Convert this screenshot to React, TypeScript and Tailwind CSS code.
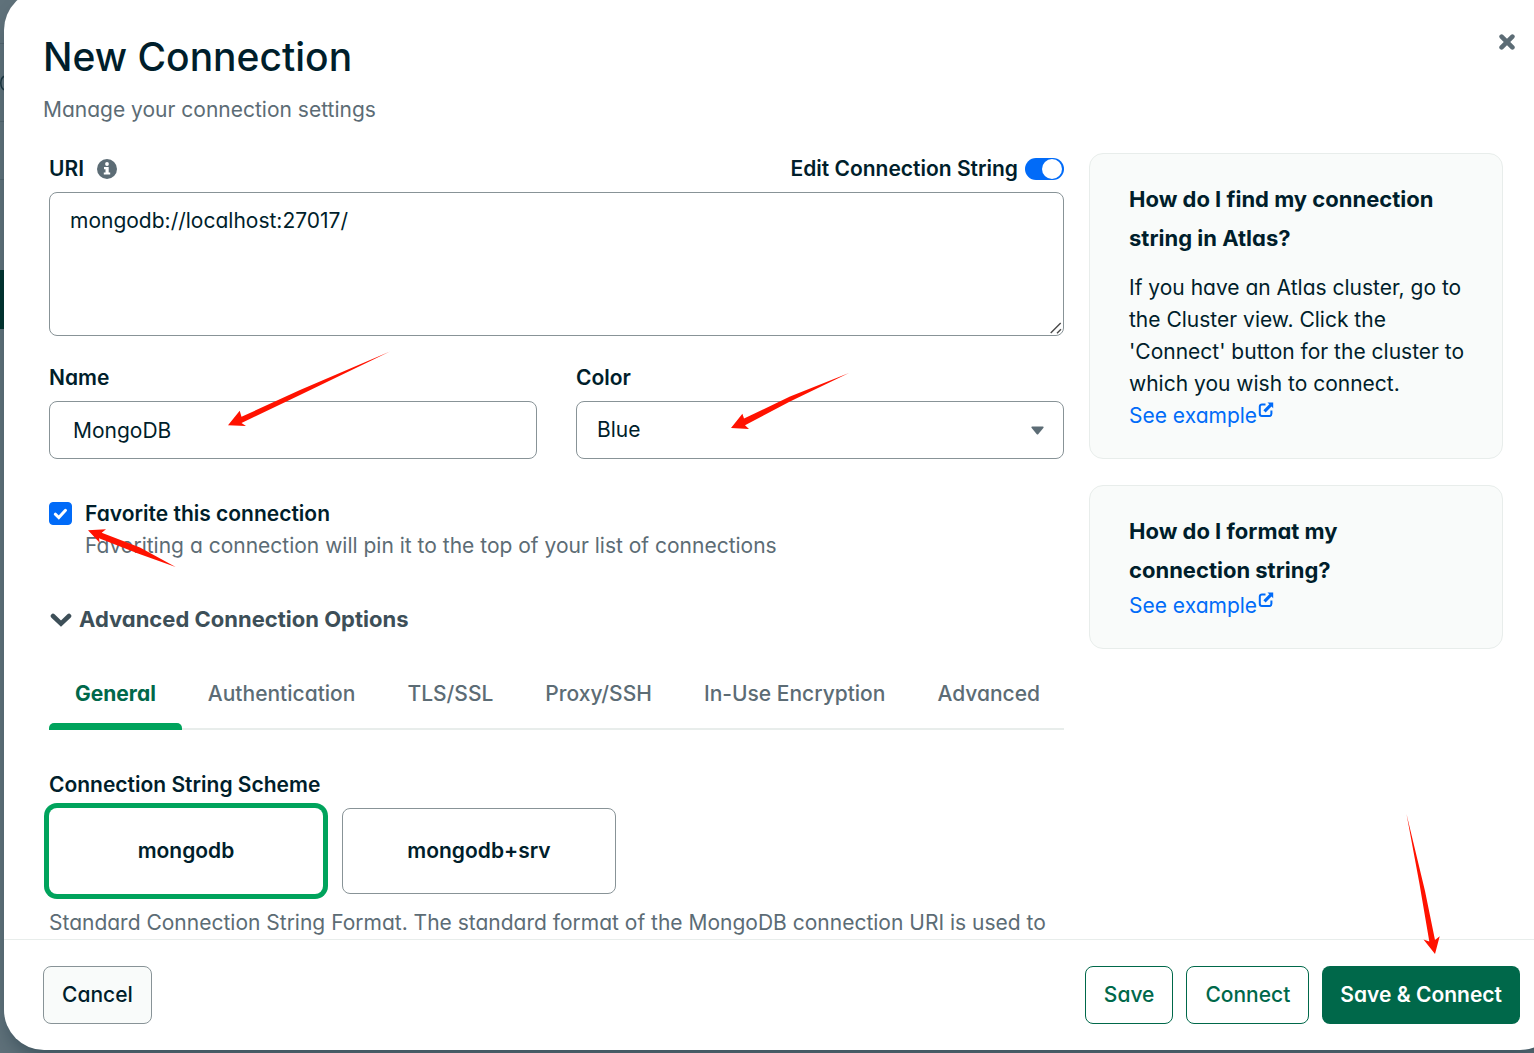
import { useState } from 'react';
import type { ReactNode } from 'react';

const TABS = ['General', 'Authentication', 'TLS/SSL', 'Proxy/SSH', 'In-Use Encryption', 'Advanced'];
const SCHEMES = ['mongodb', 'mongodb+srv'];
const COLORS = ['No Color', 'Green', 'Blue', 'Red', 'Yellow'];

function InfoIcon() {
  return (
    <svg className="size-5" viewBox="0 0 20 20" aria-hidden="true">
      <circle cx="10" cy="10" r="10" fill="#5c6c75" />
      <circle cx="10" cy="5" r="1.9" fill="#fff" />
      <path d="M7 8h4.700v5.400H13.200v2.200H6.800v-2.200h1.700v-3.200H7z" fill="#fff" />
    </svg>
  );
}

function CloseIcon() {
  return (
    <svg className="size-4" viewBox="0 0 16 16" aria-hidden="true">
      <path d="M2.6 2.6l10.8 10.8M13.4 2.6L2.6 13.4" stroke="#5c6c75" strokeWidth="4.6" strokeLinecap="round" />
    </svg>
  );
}

function OpenNewTabIcon() {
  return (
    <svg className="mt-[2px] size-4" viewBox="0 0 16 16" aria-hidden="true">
      <path d="M7.500 2.400H4A2.200 2.200 0 0 0 1.800 4.600v7.200A2.200 2.200 0 0 0 4 14h7.200a2.200 2.200 0 0 0 2.200-2.200V8.600" fill="none" stroke="#016bf8" strokeWidth="2" />
      <path d="M9.500.500h5.700v5.700l-1.700-1.700-5.900 5.900L5.400 8.200l5.900-5.900z" fill="#016bf8" />
    </svg>
  );
}

function ChevronIcon() {
  return (
    <svg className="mt-[2px] h-[14px] w-[22px]" viewBox="0 0 22 14" aria-hidden="true">
      <path d="M3 3l8 7.600L19 3" fill="none" stroke="#3d4f58" strokeWidth="4.600" strokeLinecap="round" />
    </svg>
  );
}

function HelpCard({ title, children }: { title: string; children: ReactNode }) {
  return (
    <section className="rounded-[14px] border border-[#e8edeb] bg-[#f9fbfa] py-[26px] pr-[30px] pl-[39px]">
      <h2 className="pr-[10px] text-[22px] leading-[39px] font-bold">{title}</h2>
      {children}
    </section>
  );
}

function ExampleLink() {
  return (
    <a href="#example" className="flex items-start gap-px text-[#016bf8]">
      See example
      <OpenNewTabIcon />
    </a>
  );
}

// Red pointers drawn over the dialog
function Pointers() {
  return (
    <svg className="pointer-events-none absolute top-0 left-0 h-[1053px] w-[1534px]" viewBox="0 0 1534 1053" fill="#ff1200" aria-hidden="true">
      <path d="M390 351.500L300 390 241.500 416.800 239.700 410.700 228 425.300 246 426 241.500 422.900 300 395z" />
      <path d="M849 373L790 396.500 744 418.500 742.400 413.700 731 428 749 429 745 425.300 790 401.500z" />
      <path d="M175.700 567L140 547.500 101.700 532.700 106 529.300 88 530.300 99.700 542.700 99 538.300 138 553.500z" />
      <path d="M1406.500 814L1425 891 1435 940 1439.700 936.300 1435 954 1423.500 939.500 1429.300 941.500 1419.500 884z" />
    </svg>
  );
}

export default function App() {
  const [uri, setUri] = useState('mongodb://localhost:27017/');
  const [name, setName] = useState('MongoDB');
  const [color, setColor] = useState('Blue');
  const [editUri, setEditUri] = useState(true);
  const [favorite, setFavorite] = useState(true);
  const [tab, setTab] = useState('General');
  const [scheme, setScheme] = useState('mongodb');

  return (
    <div className="relative flex h-screen overflow-hidden bg-[#5f717a] font-['Inter','Liberation_Sans',sans-serif] text-[21px] leading-8 text-[#001e2b] [font-feature-settings:'cv11']">
      {/* sliver of the app behind the dialog */}
      <div className="w-1 shrink-0">
        <div className="h-11 border-b border-[#52646d]" />
        <div className="h-[78px] border-b border-[#52646d] pt-[30px]">
          <svg className="h-[18px] w-1" viewBox="0 0 4 18" aria-hidden="true">
            <path d="M5 2Q1 3 .8 9 1 15 5 16" fill="none" stroke="#1c3641" strokeWidth="1.500" />
          </svg>
        </div>
        <div className="h-[58px] border-b border-[#52646d]" />
        <div className="mt-[90px] h-[59px] bg-[#023430]" />
      </div>

      <div
        role="dialog"
        aria-labelledby="title"
        className="-mt-[10px] -mr-[26px] mb-[3px] flex min-w-0 flex-1 flex-col overflow-hidden rounded-[40px] bg-white shadow-[0_12px_20px_-6px_rgba(0,30,43,0.4)]"
      >
        <div className="min-h-0 flex-1 overflow-hidden pr-[57px] pl-[39px]">
          <header className="flex items-start justify-between pt-[43px]">
            <div>
              <h1 id="title" className="text-[39px] leading-[48px] font-medium">New Connection</h1>
              <p className="mt-[13px] text-[#5c6c75]">Manage your connection settings</p>
            </div>
            <button type="button" aria-label="Close" className="mt-px -mr-[12px]">
              <CloseIcon />
            </button>
          </header>

          <div className="mt-[27px] flex items-start gap-[25px] pl-[6px]">
            <form className="min-w-0 flex-1">
              <div className="flex items-center justify-between font-semibold">
                <div className="flex items-center gap-[13px]">
                  <label htmlFor="uri">URI</label>
                  <InfoIcon />
                </div>
                <label className="relative flex items-center gap-[7px]">
                  Edit Connection String
                  <input type="checkbox" role="switch" checked={editUri} onChange={(e) => setEditUri(e.target.checked)} className="peer sr-only" />
                  <span className="flex h-[22px] w-[39px] items-center rounded-full bg-[#889397] px-[2px] peer-checked:justify-end peer-checked:bg-[#016bf8]">
                    <span className="size-5 rounded-full bg-white" />
                  </span>
                </label>
              </div>
              <div className="relative mt-[7px]">
                <textarea
                  id="uri"
                  value={uri}
                  onChange={(e) => setUri(e.target.value)}
                  className="block h-[144px] w-full resize-none rounded-lg border border-[#889397] px-5 py-3"
                />
                <svg className="pointer-events-none absolute right-[2px] bottom-[2px] size-3" viewBox="0 0 12 12" aria-hidden="true">
                  <path d="M.7 11L10.700 1M7 11.300l4-4" stroke="#4a4a4a" strokeWidth="1.400" />
                </svg>
              </div>

              <div className="mt-[26px] grid grid-cols-2 gap-[39px]">
                <div>
                  <label htmlFor="name" className="block font-semibold">Name</label>
                  <input
                    id="name"
                    type="text"
                    value={name}
                    onChange={(e) => setName(e.target.value)}
                    className="mt-[7px] block h-[58px] w-full rounded-lg border border-[#889397] px-[23px]"
                  />
                </div>
                <div>
                  <label htmlFor="color" className="block font-semibold">Color</label>
                  <div className="relative mt-[7px]">
                    <select
                      id="color"
                      value={color}
                      onChange={(e) => setColor(e.target.value)}
                      className="block h-[58px] w-full appearance-none rounded-lg border border-[#889397] px-5"
                    >
                      {COLORS.map((c) => (
                        <option key={c}>{c}</option>
                      ))}
                    </select>
                    <svg className="pointer-events-none absolute top-[25px] right-5 h-[9px] w-[13px]" viewBox="0 0 13 9" aria-hidden="true">
                      <path d="M1 .5h11q1 .2.5 1.300L7.200 8.200q-.7.700-1.400 0L.5 1.800Q0 .7 1 .5z" fill="#5c6c75" />
                    </svg>
                  </div>
                </div>
              </div>

              <div className="mt-[39px] flex gap-[13px]">
                <div className="relative mt-1 size-[23px] shrink-0">
                  <input
                    id="favorite"
                    type="checkbox"
                    checked={favorite}
                    onChange={(e) => setFavorite(e.target.checked)}
                    className="block size-[23px] appearance-none rounded-[4px] border border-[#889397] checked:border-[#016bf8] checked:bg-[#016bf8]"
                  />
                  <svg className="pointer-events-none absolute inset-0" viewBox="0 0 23 23" aria-hidden="true">
                    <path d="M6.300 12.200l3.500 3.300 6.700-7.200" fill="none" stroke="#fff" strokeWidth="3" strokeLinecap="round" />
                  </svg>
                </div>
                <div>
                  <label htmlFor="favorite" className="block font-semibold">Favorite this connection</label>
                  <p className="text-[#5c6c75]">Favoriting a connection will pin it to the top of your list of connections</p>
                </div>
              </div>

              <button type="button" className="mt-[41px] flex items-center gap-[7px] pl-[1px] text-[22px] font-bold text-[#3d4f58]">
                <ChevronIcon />
                Advanced Connection Options
              </button>

              <div role="tablist" className="mt-[23px] flex border-b-2 border-[#e8edeb]">
                {TABS.map((t) => (
                  <button
                    key={t}
                    type="button"
                    role="tab"
                    aria-selected={t === tab}
                    onClick={() => setTab(t)}
                    className="relative shrink-0 px-[26px] pt-5 pb-[18px] font-medium text-[#5c6c75] aria-selected:font-bold aria-selected:text-[#00684a]"
                  >
                    {t}
                    {t === tab && <span className="absolute inset-x-0 -bottom-[2px] h-[7px] rounded-t-[5px] bg-[#00a35c]" />}
                  </button>
                ))}
              </div>

              <fieldset className="mt-[39px]">
                <legend className="font-semibold">Connection String Scheme</legend>
                <div className="mt-[7px] flex gap-[19px]">
                  {SCHEMES.map((s) => (
                    <label
                      key={s}
                      className="relative flex h-[86px] w-[274px] items-center justify-center rounded-lg border border-[#889397] font-semibold has-checked:border-transparent has-checked:ring-5 has-checked:ring-[#00a35c]"
                    >
                      <input type="radio" name="scheme" checked={s === scheme} onChange={() => setScheme(s)} className="sr-only" />
                      {s}
                    </label>
                  ))}
                </div>
              </fieldset>
              <p className="mt-[13px] text-[#5c6c75]">Standard Connection String Format. The standard format of the MongoDB connection URI is used to</p>
            </form>

            <aside className="flex w-[414px] shrink-0 flex-col gap-[26px]">
              <HelpCard title="How do I find my connection string in Atlas?">
                <p className="mt-[14px]">If you have an Atlas cluster, go to the Cluster view. Click the 'Connect' button for the cluster to which you wish to connect.</p>
                <ExampleLink />
              </HelpCard>
              <HelpCard title="How do I format my connection string?">
                <ExampleLink />
              </HelpCard>
            </aside>
          </div>
        </div>

        <footer className="flex items-center gap-[13px] border-t border-[#e8edeb] py-[26px] pr-10 pl-[39px] font-medium">
          <button type="button" className="mr-auto h-[58px] rounded-lg border border-[#889397] bg-[#f9fbfa] px-[18px]">Cancel</button>
          <button type="button" className="h-[58px] rounded-lg border border-[#00684a] px-[18px] text-[#00684a]">Save</button>
          <button type="button" className="h-[58px] rounded-lg border border-[#00684a] px-[18px] text-[#00684a]">Connect</button>
          <button type="button" className="h-[58px] rounded-lg bg-[#00684a] px-[18px] font-semibold text-white">Save &amp; Connect</button>
        </footer>
      </div>
      <Pointers />
    </div>
  );
}
